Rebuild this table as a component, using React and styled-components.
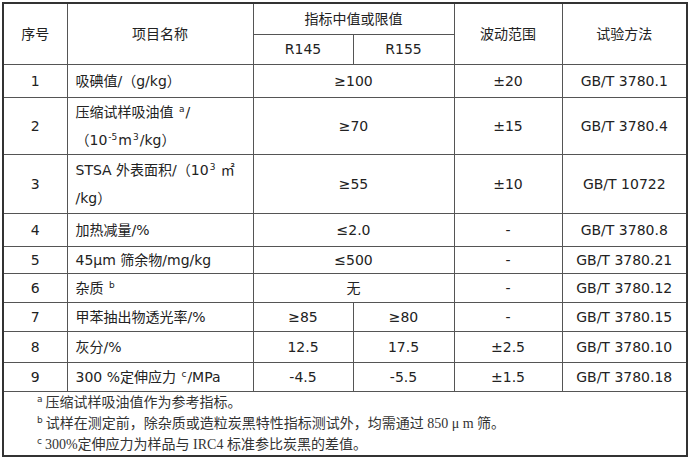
import React from 'react';
import styled, { createGlobalStyle } from 'styled-components';

const GlobalStyle = createGlobalStyle`
    html, body {
        margin: 0;
        padding: 0;
        background: #fff;
    }
    body {
        font-family: "DejaVu Sans", "Noto Sans CJK SC", sans-serif;
        color: #222;
    }
`;

const Page = styled.div`
    padding: 2px 0 0 2px;
    width: 692px;
    height: 458px;
    box-sizing: border-box;
    overflow: hidden;
`;

const Table = styled.table`
    border-collapse: collapse;
    table-layout: fixed;
    width: 686px;
    border: 2px solid #333;
    font-size: 14px;
`;

const Cell = styled.td`
    border: 1px solid #555;
    padding: 0;
    text-align: ${p => (p.$left ? 'left' : 'center')};
    padding-left: ${p => (p.$left ? '8px' : '0')};
    vertical-align: middle;
    line-height: ${p => (p.$tall ? '28px' : '18px')};
    white-space: nowrap;
`;

const Row = styled.tr`
    height: ${p => p.$h}px;
`;

const Sup = styled.sup`
    font-size: 9px;
    vertical-align: 5px;
    line-height: 0;
    margin: 0 1px;
`;

const Notes = styled.td`
    border: 1px solid #555;
    padding: 0 0 0 33px;
    vertical-align: top;
    height: 62px;
    box-sizing: border-box;
    font-family: "Liberation Serif", "Noto Sans CJK SC", serif;
    font-size: 14px;
    color: #333;
`;

const Note = styled.div`
    height: 21px;
    line-height: 21px;
    white-space: nowrap;
`;

const NoteMark = styled.span`
    font-family: "DejaVu Sans", sans-serif;
    font-size: 9px;
    line-height: 0;
    vertical-align: 5px;
    margin-right: 3px;
`;

const rows = [
    { no: '1', h: 33, name: <>吸碘值/（g/kg）</>, span: '≥100', range: '±20', method: 'GB/T 3780.1' },
    {
        no: '2', h: 55, tall: true,
        name: <>压缩试样吸油值 <Sup>a</Sup>/<br />（10<Sup>-5</Sup>m<Sup>3</Sup>/kg）</>,
        span: '≥70', range: '±15', method: 'GB/T 3780.4'
    },
    {
        no: '3', h: 59, tall: true,
        name: <>STSA 外表面积/（10<Sup>3</Sup> ㎡<br />/kg）</>,
        span: '≥55', range: '±10', method: 'GB/T 10722'
    },
    { no: '4', h: 33, name: <>加热减量/%</>, span: '≤2.0', range: '-', method: 'GB/T 3780.8' },
    { no: '5', h: 27, name: <>45μm 筛余物/mg/kg</>, span: '≤500', range: '-', method: 'GB/T 3780.21' },
    { no: '6', h: 29, name: <>杂质 <Sup>b</Sup></>, span: '无', range: '-', method: 'GB/T 3780.12' },
    { no: '7', h: 29, name: <>甲苯抽出物透光率/%</>, a: '≥85', b: '≥80', range: '-', method: 'GB/T 3780.15' },
    { no: '8', h: 31, name: <>灰分/%</>, a: '12.5', b: '17.5', range: '±2.5', method: 'GB/T 3780.10' },
    { no: '9', h: 29, name: <>300 %定伸应力 <Sup>c</Sup>/MPa</>, a: '-4.5', b: '-5.5', range: '±1.5', method: 'GB/T 3780.18' },
];

export default function App() {
    return (
        <Page>
            <GlobalStyle />
            <Table>
                <colgroup>
                    <col style={{ width: 64 }} />
                    <col style={{ width: 186 }} />
                    <col style={{ width: 100 }} />
                    <col style={{ width: 101 }} />
                    <col style={{ width: 108 }} />
                    <col />
                </colgroup>
                <tbody>
                    <Row $h={31}>
                        <Cell rowSpan={2}>序号</Cell>
                        <Cell rowSpan={2}>项目名称</Cell>
                        <Cell colSpan={2}>指标中值或限值</Cell>
                        <Cell rowSpan={2}>波动范围</Cell>
                        <Cell rowSpan={2}>试验方法</Cell>
                    </Row>
                    <Row $h={30}>
                        <Cell>R145</Cell>
                        <Cell>R155</Cell>
                    </Row>
                    {rows.map(r => (
                        <Row key={r.no} $h={r.h}>
                            <Cell>{r.no}</Cell>
                            <Cell $left $tall={r.tall}>{r.name}</Cell>
                            {r.span
                                ? <Cell colSpan={2}>{r.span}</Cell>
                                : <>
                                    <Cell>{r.a}</Cell>
                                    <Cell>{r.b}</Cell>
                                </>}
                            <Cell>{r.range}</Cell>
                            <Cell>{r.method}</Cell>
                        </Row>
                    ))}
                    <tr>
                        <Notes colSpan={6}>
                            <Note><NoteMark>a</NoteMark>压缩试样吸油值作为参考指标。</Note>
                            <Note><NoteMark>b</NoteMark>试样在测定前，除杂质或造粒炭黑特性指标测试外，均需通过 850 μ m 筛。</Note>
                            <Note><NoteMark>c</NoteMark>300%定伸应力为样品与 IRC4 标准参比炭黑的差值。</Note>
                        </Notes>
                    </tr>
                </tbody>
            </Table>
        </Page>
    );
}
